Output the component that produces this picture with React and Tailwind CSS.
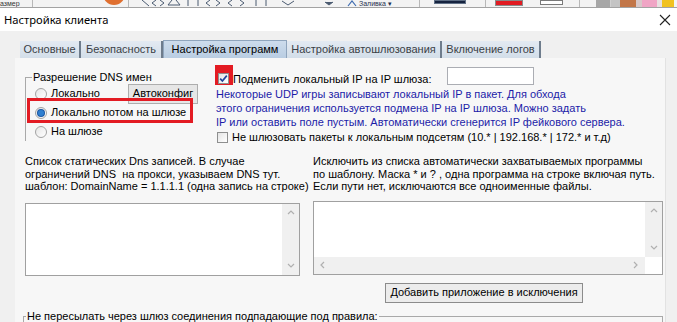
import React from "react";

const Check = () => (
  <svg width="9" height="9" viewBox="0 0 9 9">
    <path d="M1.2 4.6 L3.4 7 L7.8 1.6" fill="none" stroke="#23449a" strokeWidth="1.7" />
  </svg>
);

const Checkbox = ({ checked }) => (
  <div className="w-[11px] h-[11px] shrink-0 border border-[#8e8f8f] bg-gradient-to-br from-[#e4e4e4] to-white flex items-center justify-center">
    {checked && <Check />}
  </div>
);

const Radio = ({ checked }) => (
  <div className="w-[12px] h-[12px] shrink-0 rounded-full border border-[#a3a3a3] bg-gradient-to-br from-[#e6e6e6] to-white flex items-center justify-center">
    {checked && <div className="w-[6px] h-[6px] rounded-full bg-[#2f7fd0] ring-1 ring-[#1b58a3]" />}
  </div>
);

const Chevron = ({ dir }) => {
  const d = {
    up: "M1 5 L4 2 L7 5",
    down: "M1 2 L4 5 L7 2",
    left: "M5 1 L2 4 L5 7",
    right: "M2 1 L5 4 L2 7",
  }[dir];
  return (
    <svg width="8" height="8" viewBox="0 0 8 8">
      <path d={d} fill="none" stroke="#b0b0b0" strokeWidth="1.2" />
    </svg>
  );
};

const VScroll = () => (
  <div className="w-[17px] bg-[#f0f0f0] flex flex-col justify-between items-center py-[5px]">
    <Chevron dir="up" />
    <Chevron dir="down" />
  </div>
);

const TopStrip = () => (
  <div className="h-[8px] flex overflow-hidden bg-[#f3f3f3] border-b border-[#a3a3a3] text-[#333]">
    <div className="w-[32px] flex items-end">
      <span className="text-[7px] leading-[7px]">азмер</span>
    </div>
    <div className="w-px bg-[#b8b8b8]" />
    <div className="w-[70px]" />
    <div className="w-[22px] flex items-end">
      <div className="w-[22px] h-[22px] shrink-0 rounded-full bg-[#e07030] mb-[2px]" />
    </div>
    <div className="w-[3px]" />
    <div className="w-px bg-[#b8b8b8]" />
    <div className="w-[13px]" />
    <svg width="195" height="7" viewBox="0 0 195 7">
      <g fill="none" stroke="#4a5a70" strokeWidth="1">
        <path d="M0 0 L7 6" />
        <path d="M14 0 L10 3 L14 6 M18 0 L22 3 L18 6" />
        <path d="M30 0 L26 5 L38 5 L34 0" />
        <path d="M46 0 L46 6 M56 0 L56 6" />
        <path d="M68 0 L64 3 L68 6 M74 0 L78 3 L74 6" />
        <path d="M90 0 L86 3 L90 6 M98 0 L102 3 L98 6" />
        <path d="M114 0 L114 6 M124 0 L124 6" />
        <path d="M140 1 L146 5 L152 1" />
        <path d="M183 2 L187 5 L191 2" fill="#4a5a70" />
      </g>
    </svg>
    <div className="w-[10px]" />
    <div className="flex items-end gap-[2px] w-[72px]">
      <svg width="10" height="7" viewBox="0 0 10 7">
        <path d="M1 6 L5 1 L9 6" fill="none" stroke="#3d6bb0" strokeWidth="1.2" />
      </svg>
      <span className="text-[7px] leading-[7px] text-[#1e2f4e]">Заливка ▾</span>
    </div>
    <div className="w-px bg-[#b8b8b8]" />
    <div className="w-[14px]" />
    <div className="w-[32px] h-[4px] bg-[#15233f] border border-[#5f6f85]" />
    <div className="w-[19px]" />
    <div className="w-px bg-[#b8b8b8]" />
    <div className="w-[9px]" />
    <div className="w-[28px] h-[6px] bg-[#e11b22] border border-[#8a8a8a]" />
    <div className="w-[17px]" />
    <div className="w-[23px] h-[5px] bg-white border border-[#7a7a7a]" />
    <div className="w-[16px]" />
    <div className="w-px bg-[#b8b8b8]" />
    <div className="w-[16px]" />
    <div className="w-[14px] h-full bg-[#a7a7a7]" />
    <div className="w-px bg-[#d0d0d0]" />
    <div className="w-[9px] h-full bg-[#c4c4c4]" />
    <div className="w-[16px] h-full bg-[#c27648]" />
    <div className="w-[6px] h-full bg-[#d8c8c8]" />
    <div className="w-[15px] h-full bg-[#f0a5c5]" />
    <div className="w-[5px] h-full bg-[#e8e0e0]" />
    <div className="w-[12px] h-full bg-[#f1c21f]" />
  </div>
);

const tabs = [
  { label: "Основные", w: "w-[61px]" },
  { label: "Безопасность", w: "w-[82px]" },
  { label: "Настройка программ", w: "w-[124px]", active: true },
  { label: "Настройка автошлюзования", w: "w-[155px]" },
  { label: "Включение логов", w: "w-[99px]" },
];

const Tabs = () => (
  <div className="ml-[20px] h-[18px] flex items-end">
    {tabs.map((t) =>
      t.active ? (
        <div
          key={t.label}
          className={`${t.w} h-[18px] flex items-center justify-center bg-gradient-to-b from-[#cddcec] to-[#b9cde2] border border-b-0 border-[#8fa5bd] text-black`}
        >
          {t.label}
        </div>
      ) : (
        <div
          key={t.label}
          className={`${t.w} h-[17px] flex items-center justify-center bg-gradient-to-b from-[#e3eaf2] to-[#d3dee9] border-r-2 border-[#6e7c8c] text-[#3a3f46]`}
        >
          {t.label}
        </div>
      )
    )}
  </div>
);

export default function App() {
  return (
    <div className="w-[677px] h-[322px] overflow-hidden bg-[#f0f0f0] text-[11px] leading-[13px] text-black font-['Liberation_Sans',Arial,sans-serif]">
      <TopStrip />

      <div className="h-[23px] bg-white flex items-center justify-between pl-[4px] pr-[6px]">
        <span className="font-['Noto_Sans',sans-serif] text-[11.2px] leading-[16px]">Настройка клиента</span>
        <svg width="12" height="12" viewBox="0 0 12 12">
          <path d="M1 1 L11 11 M11 1 L1 11" stroke="#222" strokeWidth="1.1" />
        </svg>
      </div>

      <div className="pt-[9px]">
        <Tabs />

        <div className="ml-[15px] w-[651px] h-[280px] bg-[#f7f7f7] border-r border-[#e2e2e2] pl-[10px]">
          {/* верхний блок */}
          <div className="flex">
            <div className="relative w-[190px]">
              <fieldset className="mt-[13px] w-[128px] min-w-0 border-l border-t border-[#a9a9a9]">
                <legend className="ml-[6px] px-[1px] leading-[13px] whitespace-nowrap">Разрешение DNS имен</legend>
                <div className="h-[19px] flex items-center pl-[9px]">
                  <Radio />
                  <span className="ml-[4px] w-[77px] shrink-0">Локально</span>
                  <div className="w-[70px] h-[20px] shrink-0 flex items-center justify-center bg-[#e6e6e6] border border-[#adadad]">
                    Автоконфиг
                  </div>
                </div>
                <div className="h-[19px] flex items-center pl-[9px]">
                  <Radio checked />
                  <span className="ml-[4px] whitespace-nowrap">Локально потом на шлюзе</span>
                </div>
                <div className="h-[19px] flex items-center pl-[9px]">
                  <Radio />
                  <span className="ml-[4px] whitespace-nowrap">На шлюзе</span>
                </div>
              </fieldset>
              <div className="absolute left-[2px] top-[40px] w-[166px] h-[25px] border-[3px] border-[#e31b23]" />
            </div>

            <div className="w-[447px] flex flex-col">
              <div className="mt-[7px] h-[20px] flex items-end">
                <div className="w-[18px] h-[20px] bg-[#e31b23] pt-[8px] pl-[3px]">
                  <Checkbox checked />
                </div>
                <span className="w-[214px] whitespace-nowrap mb-[-1px]">Подменить локальный IP на IP шлюза:</span>
                <div className="w-[87px] h-[18px] bg-white border border-[#abadb3]" />
              </div>
              <div className="mt-[2px] pl-[1px] leading-[14px] text-[#1c1ca8] whitespace-nowrap">
                <div>Некоторые UDP игры записывают локальный IP в пакет. Для обхода</div>
                <div>этого ограничения используется подмена IP на IP шлюза. Можно задать</div>
                <div>IP или оставить поле пустым. Автоматически сгенерится IP фейкового сервера.</div>
              </div>
              <div className="mt-[1px] h-[15px] flex items-center pl-[2px]">
                <Checkbox />
                <span className="ml-[4px] whitespace-nowrap">
                  Не шлюзовать пакеты к локальным подсетям (10.* | 192.168.* | 172.* и т.д)
                </span>
              </div>
            </div>
          </div>

          {/* списки */}
          <div className="flex">
            <div className="w-[275px] flex flex-col">
              <div className="mt-[10px] leading-[12.5px] whitespace-pre">
                <div>Список статических Dns записей. В случае</div>
                <div>ограничений DNS  на прокси, указываем DNS тут.</div>
                <div>шаблон: DomainName = 1.1.1.1 (одна запись на строке)</div>
              </div>
              <div className="mt-[10px] h-[73px] flex bg-white border border-[#a0a0a0]">
                <div className="flex-1" />
                <VScroll />
              </div>
            </div>

            <div className="ml-[13px] w-[350px] flex flex-col">
              <div className="mt-[10px] leading-[12.5px] whitespace-nowrap">
                <div>Исключить из списка автоматически захватываемых программы</div>
                <div>по шаблону. Маска * и ? , одна программа на строке включая путь.</div>
                <div>Если пути нет, исключаются все одноименные файлы.</div>
              </div>
              <div className="mt-[8px] h-[74px] flex flex-col bg-white border border-[#a0a0a0]">
                <div className="flex-1 flex">
                  <div className="flex-1" />
                  <VScroll />
                </div>
                <div className="h-[17px] flex">
                  <div className="flex-1 bg-[#f0f0f0] flex items-center justify-between px-[5px]">
                    <Chevron dir="left" />
                    <Chevron dir="right" />
                  </div>
                  <div className="w-[17px] bg-white" />
                </div>
              </div>
              <div className="mt-[8px] ml-[72px] w-[198px] h-[20px] flex items-center justify-center bg-[#ececec] border border-[#8c8c8c]">
                Добавить приложение в исключения
              </div>
            </div>
          </div>

          <fieldset className="mt-[7px] ml-[-2px] w-[640px] h-[40px] border-l border-t border-r border-[#a9a9a9]">
            <legend className="ml-[2px] px-[1px] leading-[13px]">
              Не пересылать через шлюз соединения подпадающие под правила:
            </legend>
          </fieldset>
        </div>
      </div>
    </div>
  );
}
